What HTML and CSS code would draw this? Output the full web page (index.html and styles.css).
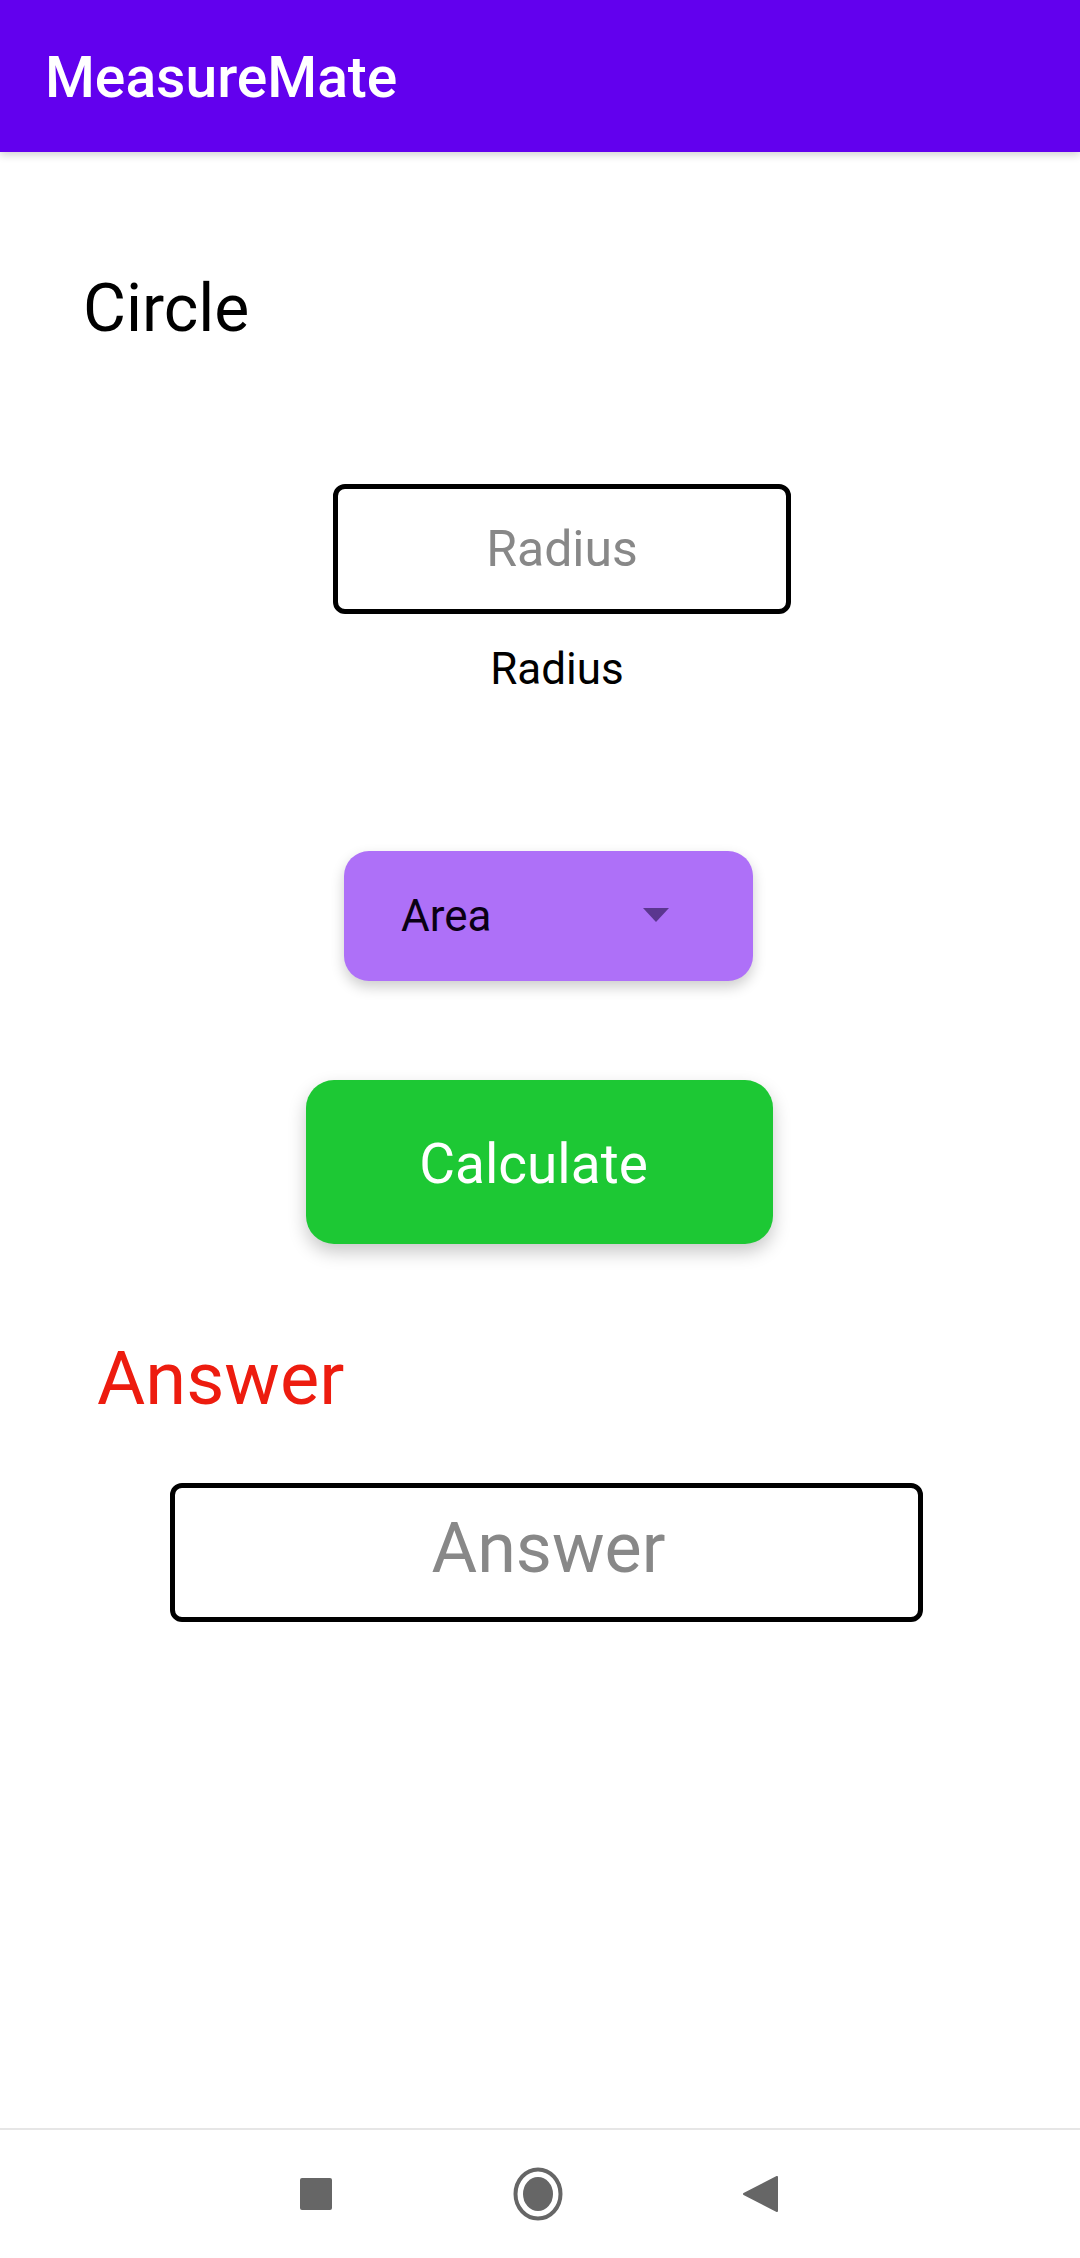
FILE: index.html
```html
<!DOCTYPE html>
<html>
<head>
<meta http-equiv="Content-Type" content="text/html; charset=UTF-8" />
<title>MeasureMate</title>
<link rel="stylesheet" href="styles.css">
</head>
<body>
  <header class="appbar">
    <span class="appbar-title">MeasureMate</span>
  </header>

  <main class="content">
    <div class="shape-title">Circle</div>

    <div class="field-group">
      <div class="input-box radius-box">
        <span class="placeholder">Radius</span>
      </div>
      <div class="field-label">Radius</div>
    </div>

    <div class="spinner">
      <span class="spinner-text">Area</span>
      <svg class="spinner-arrow" width="26" height="14" viewBox="0 0 26 14">
        <polygon points="0,0 26,0 13,14" />
      </svg>
    </div>

    <div class="calc-button">Calculate</div>

    <div class="answer-title">Answer</div>

    <div class="input-box answer-box">
      <span class="placeholder answer-placeholder">Answer</span>
    </div>
  </main>

  <nav class="navbar">
    <div class="nav-slot">
      <svg width="32" height="32" viewBox="0 0 32 32"><rect x="0" y="0" width="32" height="32" rx="2" fill="#666"/></svg>
    </div>
    <div class="nav-slot">
      <svg width="50" height="54" viewBox="0 0 50 54">
        <ellipse cx="25" cy="27" rx="22.5" ry="24.5" fill="none" stroke="#666" stroke-width="4"/>
        <ellipse cx="25" cy="27" rx="15" ry="17" fill="#666"/>
      </svg>
    </div>
    <div class="nav-slot">
      <svg width="36" height="36" viewBox="0 0 36 36"><polygon points="35,1 35,35 2,18" fill="#666" stroke="#666" stroke-width="2" stroke-linejoin="round"/></svg>
    </div>
  </nav>
</body>
</html>
```

FILE: styles.css
```css
html, body {
  margin: 0;
  padding: 0;
}
body {
  min-height: 100vh;
  display: flex;
  flex-direction: column;
  background: white;
  font-family: Roboto, "Liberation Sans", sans-serif;
  color: black;
}
.appbar {
  height: 152px;
  background: #6200ee;
  display: flex;
  align-items: center;
  padding-left: 45px;
  padding-top: 3px;
  box-sizing: border-box;
  box-shadow: 0 3px 8px rgba(0, 0, 0, 0.18);
  position: relative;
  z-index: 1;
}
.appbar-title {
  color: white;
  font-size: 57px;
  font-weight: 500;
  line-height: 1;
}
.content {
  flex: 1;
  display: flex;
  flex-direction: column;
  align-items: flex-start;
}
.shape-title {
  font-size: 66px;
  line-height: 1;
  margin-top: 124px;
  margin-left: 83px;
}
.field-group {
  margin-top: 142px;
  margin-left: 333px;
  width: 458px;
}
.input-box {
  border: 5px solid black;
  border-radius: 12px;
  box-sizing: border-box;
  display: flex;
  align-items: center;
  justify-content: center;
}
.radius-box {
  height: 130px;
}
.placeholder {
  color: #888888;
  font-size: 50px;
  line-height: 1;
}
.field-label {
  font-size: 44px;
  line-height: 1;
  text-align: center;
  margin-top: 33px;
  padding-right: 10px;
}
.spinner {
  margin-top: 160px;
  margin-left: 344px;
  width: 409px;
  height: 130px;
  box-sizing: border-box;
  background: #ae70f8;
  border-radius: 25px;
  box-shadow: 0 6px 14px rgba(0, 0, 0, 0.2);
  display: flex;
  align-items: center;
  padding-left: 57px;
  padding-right: 84px;
}
.spinner-text {
  font-size: 44px;
  line-height: 1;
  color: #0a0014;
}
.spinner-arrow {
  margin-left: auto;
  fill: #5b3690;
  margin-top: -2px;
}
.calc-button {
  margin-top: 99px;
  margin-left: 306px;
  width: 467px;
  height: 164px;
  box-sizing: border-box;
  padding-right: 12px;
  padding-top: 4px;
  background: #1dc834;
  border-radius: 28px;
  box-shadow: 0 8px 18px rgba(0, 0, 0, 0.22);
  color: white;
  font-size: 55px;
  line-height: 1;
  display: flex;
  align-items: center;
  justify-content: center;
}
.answer-title {
  color: #ed1c0f;
  font-size: 74px;
  line-height: 1;
  margin-top: 98px;
  margin-left: 97px;
}
.answer-box {
  margin-top: 67px;
  margin-left: 170px;
  width: 753px;
  height: 139px;
  padding-left: 4px;
}
.answer-placeholder {
  font-size: 70px;
  margin-top: -10px;
}
.navbar {
  height: 130px;
  border-top: 2px solid #e6e6e6;
  box-sizing: border-box;
  display: flex;
  justify-content: center;
  align-items: center;
  gap: 122px;
  padding-right: 4px;
}
.nav-slot {
  width: 100px;
  display: flex;
  justify-content: center;
  align-items: center;
}
```
